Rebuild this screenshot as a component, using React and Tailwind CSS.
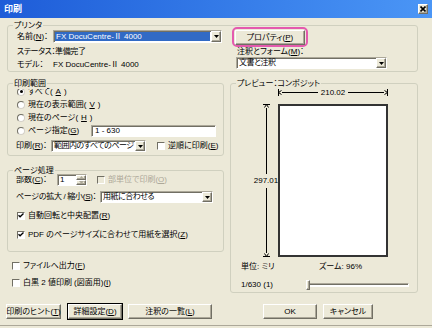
import React from "react";

const sunken =
  "border border-t-[#ACA899] border-l-[#ACA899] border-b-white border-r-white shadow-[inset_1px_1px_0_#716F64]";
const raised =
  "border border-t-white border-l-white border-b-[#716F64] border-r-[#716F64] shadow-[inset_-1px_-1px_0_#ACA899]";

const U = ({ children }) => <span className="underline underline-offset-1">{children}</span>;

function DropBtn() {
  return (
    <div className={`w-[10px] shrink-0 bg-[#ECE9D8] flex items-center justify-center ${raised}`}>
      <svg width="5" height="3" viewBox="0 0 5 3">
        <path d="M0 0h5L2.5 3z" fill="#000" />
      </svg>
    </div>
  );
}

function Combo({ className, selected, children }) {
  return (
    <div className={`flex bg-white ${sunken} ${className}`}>
      <div className="flex-1 min-w-0 flex items-stretch p-[1px] overflow-hidden">
        <span
          className={`flex items-center px-[1px] whitespace-nowrap tracking-[-0.5px] ${
            selected ? "flex-1 bg-[#316AC5] text-white tracking-normal" : ""
          }`}
        >
          {children}
        </span>
      </div>
      <DropBtn />
    </div>
  );
}

function Radio({ on }) {
  return (
    <span className="w-[8px] h-[8px] shrink-0 rounded-full bg-white border border-t-[#716F64] border-l-[#716F64] border-b-[#D4D0C8] border-r-[#D4D0C8] flex items-center justify-center">
      {on && <span className="w-[3px] h-[3px] rounded-full bg-black" />}
    </span>
  );
}

function Check({ on, disabled }) {
  return (
    <span
      className={`w-[8px] h-[8px] shrink-0 border border-t-[#716F64] border-l-[#716F64] border-b-white border-r-white flex items-center justify-center ${
        disabled ? "bg-[#ECE9D8]" : "bg-white"
      }`}
    >
      {on && (
        <svg width="6" height="5" viewBox="0 0 6 5">
          <path d="M0.5 2.2l1.6 1.6L5.5 0.5" stroke="#000" strokeWidth="1.3" fill="none" />
        </svg>
      )}
    </span>
  );
}

function Group({ label, className, children }) {
  return (
    <div className={`relative border border-[#D0D0BF] rounded-[3px] ${className}`}>
      <span className="absolute left-[5px] top-[-6px] px-[1px] leading-[11px] bg-[#ECE9D8] whitespace-nowrap">
        {label}
      </span>
      {children}
    </div>
  );
}

function Button({ className, children }) {
  return (
    <div
      className={`h-[15px] flex items-center justify-center bg-[#ECE9D8] whitespace-nowrap ${raised} ${className}`}
    >
      {children}
    </div>
  );
}

function RadioRow({ on, children }) {
  return (
    <div className="h-[13px] flex items-center gap-[3px]">
      <Radio on={on} />
      {children}
    </div>
  );
}

function CheckRow({ on, disabled, className = "", children }) {
  return (
    <div className={`h-[13px] flex items-center gap-[3px] ${className}`}>
      <Check on={on} disabled={disabled} />
      <span className={disabled ? "text-[#ACA899]" : ""}>{children}</span>
    </div>
  );
}

function DimEnd({ flip }) {
  return (
    <svg width="4" height="7" viewBox="0 0 4 7" className={flip ? "-scale-x-100" : ""}>
      <path d="M0.5 0v7M0.5 3.5L3.5 1.5M0.5 3.5L3.5 5.5" stroke="#000" fill="none" />
    </svg>
  );
}

function DimEndV({ flip }) {
  return (
    <svg width="7" height="4" viewBox="0 0 7 4" className={flip ? "-scale-y-100" : ""}>
      <path d="M0 0.5h7M3.5 0.5L1.5 3.5M3.5 0.5L5.5 3.5" stroke="#000" fill="none" />
    </svg>
  );
}

export default function App() {
  return (
    <div className="w-[432px] h-[328px] bg-[#ECE9D8] flex flex-col overflow-hidden text-[8px] leading-none text-black font-['Liberation_Sans','Noto_Sans_CJK_JP',sans-serif] [font-feature-settings:'palt']">
      <div className="h-[18px] shrink-0 flex items-center pl-[4px] pr-[4px] bg-linear-to-r from-[#1E5CD8] to-[#4B96F6]">
        <span className="text-white font-bold text-[9px]">印刷</span>
        <div className={`ml-auto w-[10px] h-[10px] bg-[#ECE9D8] flex items-center justify-center ${raised}`}>
          <svg width="6" height="6" viewBox="0 0 6 6">
            <path d="M0.5 0.5l5 5M5.5 0.5l-5 5" stroke="#000" strokeWidth="1.6" />
          </svg>
        </div>
      </div>

      <div className="px-[7px] flex flex-col">
        <Group label="プリンタ" className="mt-[7px] h-[47px] w-[411px] flex">
          <div className="w-[224px] pl-[9px] flex flex-col">
            <div className="mt-[4px] h-[13px] flex items-center">
              <span className="w-[36px] whitespace-nowrap">
                名前(<U>N</U>)：
              </span>
              <Combo selected className="h-[13px] w-[169px]">
                FX DocuCentre-Ⅱ 4000
              </Combo>
            </div>
            <div className="mt-[3px] h-[12px] flex items-center whitespace-nowrap tracking-[-0.4px]">
              ステータス：準備完了
            </div>
            <div className="mt-[2px] h-[12px] flex items-center">
              <span className="w-[36px] whitespace-nowrap">モデル：</span>
              <span>FX DocuCentre-Ⅱ 4000</span>
            </div>
          </div>
          <div className="flex flex-col">
            <div className="mt-[1px] w-[76px] h-[20px] border-2 border-[#E45AAE] rounded-[5px] p-[1px]">
              <Button className="h-[14px] w-full">
                プロパティ(<U>P</U>)
              </Button>
            </div>
            <div className="ml-[5px] h-[10px] flex items-center whitespace-nowrap">
              注釈とフォーム(<U>M</U>)：
            </div>
            <Combo className="ml-[4px] h-[12px] w-[151px]">文書と注釈</Combo>
          </div>
        </Group>

        <div className="flex gap-[6px] h-[221px]">
          <div className="w-[217px] flex flex-col">
            <Group label="印刷範囲" className="mt-[11px] h-[73px]">
              <div className="pl-[9px] pt-[1px] flex flex-col">
                <RadioRow on>
                  すべて(<U>A</U>)
                </RadioRow>
                <RadioRow>
                  現在の表示範囲(<U>V</U>)
                </RadioRow>
                <RadioRow>
                  現在のページ(<U>H</U>)
                </RadioRow>
                <div className="h-[13px] flex items-center gap-[3px]">
                  <Radio />
                  <span className="w-[60px]">
                    ページ指定(<U>G</U>)
                  </span>
                  <div className={`h-[12px] w-[125px] bg-white flex items-center px-[3px] ${sunken}`}>1 - 630</div>
                </div>
                <div className="mt-[3px] h-[12px] flex items-center">
                  <span className="w-[35px] -ml-[1px] whitespace-nowrap">
                    印刷(<U>R</U>)：
                  </span>
                  <Combo className="h-[12px] w-[95px]">範囲内のすべてのページ</Combo>
                  <CheckRow className="ml-[11px]">
                    逆順に印刷(<U>E</U>)
                  </CheckRow>
                </div>
              </div>
            </Group>

            <Group label="ページ処理" className="mt-[14px] h-[82px]">
              <div className="pl-[8px] pt-[3px] flex flex-col">
                <div className="h-[12px] flex items-center">
                  <span className="w-[41px] whitespace-nowrap">
                    部数(<U>C</U>)：
                  </span>
                  <div className={`h-[12px] w-[30px] bg-white flex ${sunken}`}>
                    <span className="flex-1 flex items-center px-[2px]">1</span>
                    <div className="w-[10px] flex flex-col">
                      <div className={`flex-1 bg-[#ECE9D8] flex items-center justify-center ${raised}`}>
                        <svg width="5" height="3" viewBox="0 0 5 3">
                          <path d="M0 3h5L2.5 0z" fill="#ACA899" />
                        </svg>
                      </div>
                      <div className={`flex-1 bg-[#ECE9D8] flex items-center justify-center ${raised}`}>
                        <svg width="5" height="3" viewBox="0 0 5 3">
                          <path d="M0 0h5L2.5 3z" fill="#ACA899" />
                        </svg>
                      </div>
                    </div>
                  </div>
                  <CheckRow disabled className="ml-[10px]">
                    部単位で印刷(<U>O</U>)
                  </CheckRow>
                </div>
                <div className="mt-[5px] h-[12px] flex items-center">
                  <span className="w-[84px] whitespace-nowrap tracking-[-0.3px]">
                    ページの拡大 / 縮小(<U>S</U>)：
                  </span>
                  <Combo className="h-[12px] w-[113px]">用紙に合わせる</Combo>
                </div>
                <CheckRow on className="mt-[6px] pl-[1px]">
                  自動回転と中央配置(<U>R</U>)
                </CheckRow>
                <CheckRow on className="mt-[6px] pl-[1px]">
                  PDF のページサイズに合わせて用紙を選択(<U>Z</U>)
                </CheckRow>
              </div>
            </Group>

            <CheckRow className="mt-[7px] pl-[5px]">
              ファイルへ出力(<U>F</U>)
            </CheckRow>
            <CheckRow className="mt-[4px] pl-[5px]">
              白黒 2 値印刷 (図面用)(<U>I</U>)
            </CheckRow>
          </div>

          <Group label="プレビュー：コンポジット" className="mt-[11px] h-[210px] w-[188px]">
            <div className="pt-[4px] flex flex-col">
              <div className="ml-[47px] w-[110px] h-[9px] flex items-center">
                <DimEnd />
                <div className="flex-1 h-px bg-black" />
                <span className="px-[3px]">210.02</span>
                <div className="flex-1 h-px bg-black" />
                <DimEnd flip />
              </div>
              <div className="mt-[7px] ml-[23px] flex">
                <div className="w-[24px] h-[153px] flex flex-col items-center">
                  <DimEndV />
                  <div className="flex-1 w-px bg-black" />
                  <span className="py-[3px]">297.01</span>
                  <div className="flex-1 w-px bg-black" />
                  <DimEndV flip />
                </div>
                <div className="w-[110px] h-[153px] bg-white border-2 border-[#333333]" />
              </div>
              <div className="mt-[4px] pl-[10px] h-[12px] flex items-center">
                <span className="w-[78px]">単位: ミリ</span>
                <span>ズーム: 96%</span>
              </div>
              <div className="mt-[6px] pl-[10px] h-[12px] flex items-center">
                <span className="w-[65px]">1/630 (1)</span>
                <div className="relative w-[103px] h-[10px] flex items-center">
                  <div className="w-full h-[4px] bg-white border border-t-[#ACA899] border-l-[#ACA899] border-b-white border-r-white shadow-[inset_1px_1px_0_#716F64]" />
                  <div className={`absolute left-0 top-0 w-[4px] h-[10px] bg-[#ECE9D8] ${raised}`} />
                </div>
              </div>
            </div>
          </Group>
        </div>
      </div>

      <div className="mt-[11px] pl-[6px] pr-[14px] flex">
        <Button className="w-[55px]">
          印刷のヒント(<U>T</U>)
        </Button>
        <Button className="ml-[7px] w-[54px] outline outline-black">
          詳細設定(<U>D</U>)
        </Button>
        <Button className="ml-[6px] w-[84px]">
          注釈の一覧(<U>L</U>)
        </Button>
        <Button className="ml-[51px] w-[54px]">OK</Button>
        <Button className="ml-[6px] w-[50px]">キャンセル</Button>
      </div>

      <div className="mt-auto h-[3px] border-t border-[#ACA899]" />
    </div>
  );
}
